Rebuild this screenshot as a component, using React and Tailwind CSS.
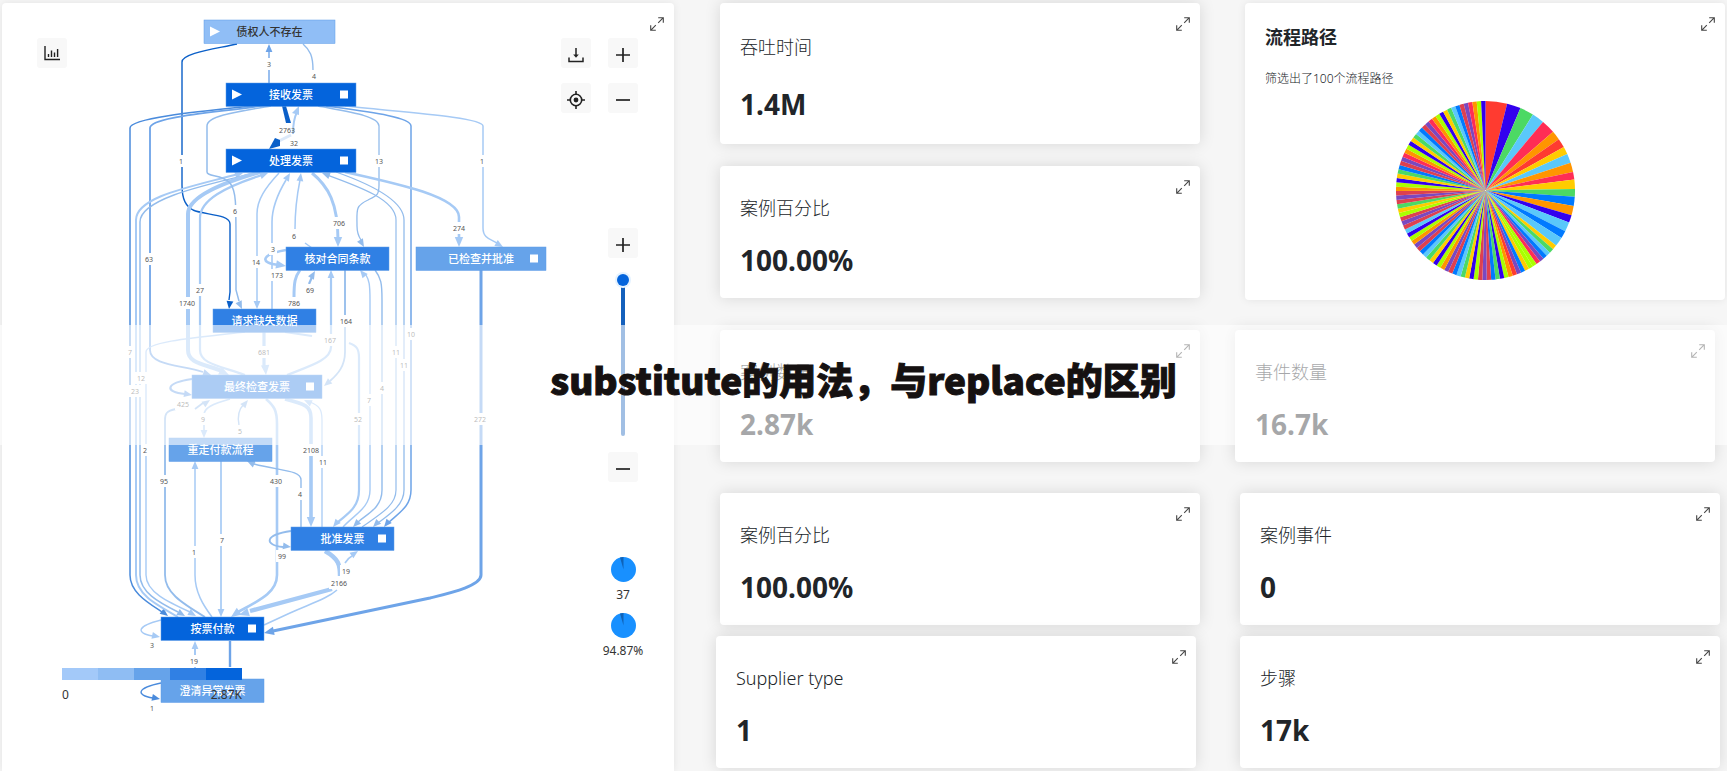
import React, { useState } from 'react';

const LIGHT = '#a6caf5';
const SOFT = '#93bcec';
const MID = '#6ea4e8';
const STRONG = '#4a8bdc';
const DARK = '#0a5fc8';

// d: path, w: line width, head: [x, y, angle in degrees] of the arrow tip
const edges = [
  { d: 'M237 44 C215 49 182 53 182 62 V185 C182 200 186 206 193 210 C204 215 230 214 230 224 V292 L229 300', c: DARK, w: 1.4, head: [229, 309, 97] },
  { d: 'M269 83 V50', c: MID, w: 1.4, head: [269, 44, -90] },
  { d: 'M303 44 C310 50 313 56 313 70', c: SOFT, w: 1.4 },
  { d: 'M262 105 C215 110 130 117 130 128 V575 C130 592 147 602 162 612', c: STRONG, w: 1.5, head: [168, 616, 38] },
  { d: 'M266 105 C225 112 150 116 150 128 V350 C150 365 180 365 203 372', c: MID, w: 1.8, head: [211, 375, 18] },
  { d: 'M238 174 C195 186 136 196 136 220 V575 C136 594 155 604 178 617', c: LIGHT, w: 2, head: [243, 173, -17] },
  { d: 'M255 173 C210 184 140 198 140 222 V575 C140 592 158 602 178 612', c: SOFT, w: 1.5, head: [185, 616, 30] },
  { d: 'M245 332 C190 338 146 342 146 352 V575 C146 592 168 602 190 612', c: LIGHT, w: 1.4, head: [196, 616, 30] },
  { d: 'M260 172 C225 182 188 196 188 214 V350 C188 364 205 364 222 371', c: LIGHT, w: 4, head: [229, 375, 25] },
  { d: 'M262 175 C225 187 200 200 200 218 V350 C200 364 220 366 245 375', c: LIGHT, w: 2.2, head: [268, 173, -20] },
  { d: 'M271 106 C235 112 207 116 207 126 V172 C207 177 222 174 230 183 C237 192 236 200 236 290 L239 301', c: SOFT, w: 1.5, head: [242, 309, 65] },
  { d: 'M279 173 C265 188 257 200 257 214 V301', c: LIGHT, w: 1.5, head: [257, 309, 90] },
  { d: 'M272 309 V222 C272 205 280 190 286 180', c: LIGHT, w: 1.6, head: [290, 173, -60] },
  { d: 'M312 248 L305 243 M295 229 C295 210 297 195 300 180', c: LIGHT, w: 1.5, head: [301, 173, -82] },
  { d: 'M312 173 C328 186 338 203 338 240', c: LIGHT, w: 3, head: [338, 247, 90] },
  { d: 'M318 106 C350 112 379 116 379 126 V185 C379 198 374 196 368 200 C355 206 357 210 357 226 C357 234 359 237 361 240', c: SOFT, w: 1.3, head: [364, 247, 60] },
  { d: 'M326 106 C370 112 411 117 411 126 V490 C411 506 400 512 388 523', c: MID, w: 1.5, head: [384, 527, 130] },
  { d: 'M345 106 C400 112 483 117 483 126 V228 C483 238 490 239 497 243', c: LIGHT, w: 1.5, head: [503, 247, 30] },
  { d: 'M345 172 C390 182 459 196 459 217 V240', c: LIGHT, w: 2.6, head: [459, 247, 90] },
  { d: 'M327 175 C360 187 396 200 396 220 V490 C396 505 382 513 362 527', c: SOFT, w: 1.2, head: [322, 173, -160] },
  { d: 'M336 172 C370 184 404 200 404 220 V490 C404 505 390 514 378 523', c: SOFT, w: 1.3, head: [373, 527, 135] },
  { d: 'M286 250 C262 254 258 263 279 265', c: LIGHT, w: 2.6, head: [286, 266, 10] },
  { d: 'M300 270 C295 277 294 282 294 297', c: LIGHT, w: 3 },
  { d: 'M309 284 L312 277', c: SOFT, w: 2.2, head: [315, 271, -60] },
  { d: 'M331 278 V347 C331 360 310 366 287 375', c: LIGHT, w: 2.2, head: [331, 270, -90] },
  { d: 'M345 270 V352 C345 366 338 374 330 381', c: SOFT, w: 1.8, head: [324, 386, 140] },
  { d: 'M264 332 V368', c: LIGHT, w: 3.2, head: [266, 375, 85] },
  { d: 'M285 332 L312 336 M349 343 C357 346 359 349 359 358 V490 C359 508 347 514 338 522', c: LIGHT, w: 2.2, head: [333, 527, 130] },
  { d: 'M366 275 C369 280 370 284 370 300 V490 C370 508 355 514 343 527', c: LIGHT, w: 1.4, head: [360, 270, -130] },
  { d: 'M375 270 C381 278 382 283 382 300 V490 C382 508 367 514 358 522', c: SOFT, w: 1.4, head: [353, 527, 135] },
  { d: 'M192 379 C165 383 164 392 185 394', c: MID, w: 2.2, head: [192, 395, 10] },
  { d: 'M203 403 L195 409 M176 409 C166 411 165 414 165 420 V575 C165 592 180 602 205 617', c: SOFT, w: 1.8, head: [210, 400, -35] },
  { d: 'M230 399 C212 404 204 408 204 415 V430', c: LIGHT, w: 1.7, head: [204, 438, 90] },
  { d: 'M239 425 C237 415 240 408 244 404', c: SOFT, w: 1.4, head: [248, 400, -50] },
  { d: 'M266 399 C274 406 277 410 277 424 V575 C277 593 258 601 238 612', c: LIGHT, w: 2.6, head: [231, 617, 145] },
  { d: 'M285 399 C305 404 311 406 311 418 V518', c: LIGHT, w: 3.6, head: [311, 527, 90] },
  { d: 'M310 402 C320 406 322 410 322 420 V527', c: LIGHT, w: 1.3, head: [304, 400, -155] },
  { d: 'M301 527 V480 C301 470 280 471 254 464', c: SOFT, w: 1.4, head: [247, 461, -155] },
  { d: 'M195 468 V575 C195 592 203 605 212 617', c: LIGHT, w: 1.5, head: [195, 461, -90] },
  { d: 'M221 461 V609', c: LIGHT, w: 1.7, head: [221, 617, 90] },
  { d: 'M291 531 C264 535 264 545 283 547', c: SOFT, w: 1.8, head: [291, 547, 8] },
  { d: 'M325 551 C339 559 340 565 340 576 M332 589 L250 611', c: LIGHT, w: 4.4, head: [239, 615, 163] },
  { d: 'M264 625 L290 613 C315 602 328 598 337 590 M345 563 Q348 558 352 556', c: LIGHT, w: 1.6, head: [358, 551, -35] },
  { d: 'M481 270 V575 C481 586 450 593 430 598 L273 631', c: MID, w: 3, head: [264, 633, 168] },
  { d: 'M161 620 C137 626 135 633 153 636', c: LIGHT, w: 1.3, head: [160, 637, 12] },
  { d: 'M195 648 V679', c: LIGHT, w: 2, head: [195, 641, -90] },
  { d: 'M230 641 V667', c: MID, w: 2.4 },
  { d: 'M161 683 C137 688 135 695 153 698', c: STRONG, w: 1.3, head: [160, 699, 12] },
];

const edgeLabels = [
  ['1', 181, 161], ['3', 269, 64], ['4', 314, 76], ['6', 235, 211], ['63', 149, 259],
  ['1740', 187, 303], ['27', 200, 290], ['14', 256, 262], ['3', 273, 249], ['173', 277, 275],
  ['6', 294, 236], ['706', 339, 223], ['13', 379, 161], ['1', 482, 161], ['274', 459, 228],
  ['786', 294, 303], ['69', 310, 290], ['164', 346, 321], ['167', 330, 340], ['681', 264, 352],
  ['10', 411, 334], ['11', 396, 352], ['11', 404, 365], ['7', 130, 352], ['12', 141, 378],
  ['23', 135, 391], ['4', 382, 388], ['7', 369, 400], ['425', 183, 404], ['272', 480, 419],
  ['9', 203, 419], ['5', 240, 431], ['52', 358, 419], ['2', 145, 450], ['2108', 311, 450],
  ['11', 323, 462], ['95', 164, 481], ['430', 276, 481], ['4', 300, 494], ['7', 222, 540],
  ['1', 194, 552], ['99', 282, 556], ['19', 346, 571], ['2166', 339, 583], ['3', 152, 645],
  ['19', 194, 661], ['1', 152, 708],
];

const nodes = [
  { name: '债权人不存在', x: 204, y: 20, w: 131, fill: '#90bef6', text: '#333333', start: true },
  { name: '接收发票', x: 226, y: 83, w: 130, fill: '#0464dc', start: true, end: true },
  { name: '处理发票', x: 226, y: 149, w: 130, fill: '#0464dc', start: true, end: true },
  { name: '核对合同条款', x: 286, y: 247, w: 103, fill: '#3080e4' },
  { name: '已检查并批准', x: 416, y: 247, w: 130, fill: '#66a3ea', end: true },
  { name: '请求缺失数据', x: 213, y: 309, w: 103, fill: '#3080e4' },
  { name: '最终检查发票', x: 192, y: 375, w: 130, fill: '#3080e4', end: true },
  { name: '重走付款流程', x: 169, y: 438, w: 103, fill: '#66a3ea' },
  { name: '批准发票', x: 291, y: 527, w: 103, fill: '#3080e4', end: true },
  { name: '按票付款', x: 161, y: 617, w: 103, fill: '#0464dc', end: true },
  { name: '澄清异常发票', x: 161, y: 679, w: 103, fill: '#66a3ea' },
];

const R = '#ff3b30';
const I = '#3300ee';
const G = '#4cd964';
const S = '#5ac8fa';
const K = '#ff2d55';
const O = '#ff9500';
const Y = '#ffcc00';
const B = '#007aff';
const P = '#7a48c0';
const L = '#aaff00';
const D = '#dd4050';

// [colour, end angle]
const bigSlices = [
  [R, 14], [I, 23], [G, 32], [S, 40], [K, 49], [O, 55], [R, 61], [Y, 66], [S, 72], [O, 78],
  [K, 83], [Y, 89], [G, 94], [B, 100], [O, 106], [I, 111], [S, 117], [B, 122], [S, 128],
  [Y, 131], [G, 134],
];
const smallSlices = [
  S, B, P, K, L, L, Y, B, P, R, O, L, I, G, B, D, P,
  D, L, I, Y, G, S, B, D, P, O, L, I, Y, G, S, B, D, P, O, L, I, S, D, P, D, L, Y, G, D, P, D, O,
  L, I, Y, G, B, D, P, K, O, L, I, Y, G, S, B, D, P, K, O, L, I, Y, G, S, B, D, P, K, O, L, I,
];
const slices = [
  ...bigSlices,
  ...smallSlices.map((color, i) => [color, 134 + ((i + 1) * 226) / smallSlices.length]),
];

const point = (deg, r) => {
  const a = ((deg - 90) * Math.PI) / 180;
  return `${(r + r * Math.cos(a)).toFixed(2)} ${(r + r * Math.sin(a)).toFixed(2)}`;
};

const ExpandButton = () => (
  <button type="button" aria-label="展开" className="absolute right-[10px] top-[14px] text-[#444444]">
    <svg width="14" height="14" viewBox="0 0 14 14" fill="none" stroke="currentColor" strokeWidth="1.1" className="block">
      <path d="M8.2 0.7H13.3V5.8M13.3 0.7L8.2 5.8M5.8 13.3H0.7V8.2M0.7 13.3L5.8 8.2" />
    </svg>
  </button>
);

const ToolButton = ({ label, className = 'pt-1', children }) => (
  <button
    type="button"
    aria-label={label}
    className={`flex size-[30px] shrink-0 items-center justify-center rounded-[3px] bg-[#f8f8f8] text-[#222222] ${className}`}
  >
    {children}
  </button>
);

const PlusIcon = () => (
  <svg width="14" height="14" viewBox="0 0 14 14" stroke="currentColor" strokeWidth="1.7">
    <path d="M0 7H14M7 0V14" />
  </svg>
);

const MinusIcon = () => (
  <svg width="14" height="14" viewBox="0 0 14 14" stroke="currentColor" strokeWidth="1.7">
    <path d="M0 7H14" />
  </svg>
);

const DownloadIcon = () => (
  <svg width="16" height="16" viewBox="0 0 16 16" fill="none" stroke="currentColor" strokeWidth="1.5">
    <path d="M8 1V9" />
    <path d="M5.2 7.5H10.8L8 10.8Z" fill="currentColor" stroke="none" />
    <path d="M1 10.5V14.6H15V10.5" />
  </svg>
);

const TargetIcon = () => (
  <svg width="18" height="18" viewBox="0 0 18 18" fill="none" stroke="currentColor" strokeWidth="1.6">
    <circle cx="9" cy="9" r="5.7" />
    <circle cx="9" cy="9" r="2.4" fill="currentColor" stroke="none" />
    <path d="M9 0V3.3M9 14.7V18M0 9H3.3M14.7 9H18" />
  </svg>
);

const ChartIcon = () => (
  <svg width="16" height="16" viewBox="0 0 16 16" fill="none" stroke="currentColor" strokeWidth="1.4">
    <path d="M1 1V14.5H16M4.5 12V9M7.5 12V5.5M10.5 12V7.5M13.6 12V4" />
  </svg>
);

const ProcessGraph = () => (
  <svg
    width="560"
    height="720"
    viewBox="2 3 560 720"
    className="absolute left-0 top-0"
    role="img"
    aria-label="流程图"
  >
    {edges.map(({ d, c, w, head }, i) => (
      <g key={i}>
        <path d={d} fill="none" stroke={c} strokeWidth={w} />
        {head && (
          <path
            d={w > 2.5 ? 'M0 0L-10 -4.2V4.2Z' : 'M0 0L-8 -3.4V3.4Z'}
            fill={c}
            transform={`translate(${head[0]} ${head[1]}) rotate(${head[2]})`}
          />
        )}
      </g>
    ))}
    {/* main flow between the first two steps */}
    <path d="M293 134C293 124 295 116 297 112" fill="none" stroke={LIGHT} strokeWidth="2" />
    <path d="M299 106L292 113L299 115Z" fill={LIGHT} />
    <path d="M291 135L279 141" stroke="#dbe8f8" strokeWidth="3" />
    <path d="M282 106H286L291 123H286Z" fill={DARK} />
    <path d="M269 149L275 138L280 140V146Z" fill={DARK} />
    {[...edgeLabels, ['2763', 287, 130], ['32', 294, 143]].map(([text, x, y], i) => (
      <g key={i}>
        {i < edgeLabels.length && (
          <rect x={x - text.length * 2 - 2} y={y - 6} width={text.length * 4 + 4} height="12" fill="#ffffff" />
        )}
        <text x={x} y={y + 3} textAnchor="middle" fill="#555555" className="text-[7px]">
          {text}
        </text>
      </g>
    ))}
    {nodes.map(({ name, x, y, w, fill, text, start, end }) => (
      <g key={name}>
        <rect x={x} y={y} width={w} height="23.5" fill={fill} stroke="#5e9ce8" strokeWidth="0.5" />
        {start && <path d={`M${x + 6} ${y + 6.5}L${x + 16} ${y + 11.5}L${x + 6} ${y + 16.5}Z`} fill="#ffffff" />}
        {end && <rect x={x + w - 16} y={y + 7.5} width="8" height="8" fill="#ffffff" />}
        <text x={x + w / 2} y={y + 16} textAnchor="middle" fill={text || '#ffffff'} className="text-[11px] font-medium">
          {name}
        </text>
      </g>
    ))}
  </svg>
);

const legendColors = ['bg-[#a3c9f9]', 'bg-[#8fbdf3]', 'bg-[#66a3ea]', 'bg-[#3080e4]', 'bg-[#0464dc]'];

const Legend = () => (
  <div className="absolute left-[60px] top-[665px] w-[180px] text-xs text-[#333333]">
    <div className="flex h-3">
      {legendColors.map((color) => (
        <div key={color} className={`flex-1 ${color}`} />
      ))}
    </div>
    <div className="mt-[6px] flex justify-between leading-[18px]">
      <span>0</span>
      <span>2.87K</span>
    </div>
  </div>
);

const SmallPie = ({ value }) => (
  <div className="flex flex-col items-center">
    <svg width="25" height="25" viewBox="0 0 25 25" className="block">
      <circle cx="12.5" cy="12.5" r="12.5" fill="#1890ff" />
      <path d="M12.5 12.5L9 0.6A12.4 12.4 0 0 1 12.5 0.1Z" fill="#0f62b8" />
    </svg>
    <span className="mt-[3px] text-xs leading-5 text-[#333333]">{value}</span>
  </div>
);

const GraphPanel = () => {
  const [level, setLevel] = useState(100);

  return (
    <section className="relative min-w-0 flex-[672] rounded-t bg-white shadow-[0_0_8px_rgba(0,0,0,0.08)]">
      <ProcessGraph />
      <Legend />
      <ExpandButton />
      <div className="relative flex items-start gap-[17px] p-[35px] pr-9">
        <ToolButton label="统计" className="pt-0">
          <ChartIcon />
        </ToolButton>
        <div className="ml-auto flex flex-col gap-[15px]">
          <ToolButton label="下载">
            <DownloadIcon />
          </ToolButton>
          <ToolButton label="定位">
            <TargetIcon />
          </ToolButton>
        </div>
        <div className="flex w-[30px] flex-col items-center">
          <div className="flex flex-col gap-[15px]">
            <ToolButton label="放大">
              <PlusIcon />
            </ToolButton>
            <ToolButton label="缩小">
              <MinusIcon />
            </ToolButton>
          </div>
          <div className="mt-[115px] flex flex-col items-center gap-4">
            <ToolButton label="增加">
              <PlusIcon />
            </ToolButton>
            <input
              type="range"
              aria-label="显示层级"
              min="0"
              max="100"
              value={level}
              onChange={(e) => setLevel(Number(e.target.value))}
              className="h-[162px] w-3 appearance-none bg-transparent [direction:rtl] [writing-mode:vertical-lr] [&::-webkit-slider-runnable-track]:w-1 [&::-webkit-slider-runnable-track]:rounded-full [&::-webkit-slider-runnable-track]:bg-[#1460bc] [&::-webkit-slider-thumb]:-ml-1 [&::-webkit-slider-thumb]:size-3 [&::-webkit-slider-thumb]:appearance-none [&::-webkit-slider-thumb]:rounded-full [&::-webkit-slider-thumb]:bg-[#0464dc] [&::-webkit-slider-thumb]:shadow-[0_0_0_2px_#e4f2ff]"
            />
            <ToolButton label="减少">
              <MinusIcon />
            </ToolButton>
          </div>
          <div className="mt-[75px] flex flex-col gap-2">
            <SmallPie value="37" />
            <SmallPie value="94.87%" />
          </div>
        </div>
      </div>
    </section>
  );
};

const StatCard = ({ title, value, className = '', spacing = 'gap-[18px] pt-7 pb-[18px]' }) => (
  <article className={`relative flex flex-col rounded bg-white px-5 shadow-[0_0_16px_rgba(0,0,0,0.13)] ${spacing} ${className}`}>
    <ExpandButton />
    <h2 className="text-lg leading-7 font-light text-[#212529]">{title}</h2>
    <p className="text-[28px] leading-10 font-bold text-[#212529]">{value}</p>
  </article>
);

const PathCard = () => (
  <article className="relative ml-[10px] rounded bg-white px-5 pt-5 pb-5 shadow-[0_0_8px_rgba(0,0,0,0.08)]">
    <ExpandButton />
    <h2 className="text-lg leading-7 font-bold text-[#212529]">流程路径</h2>
    <p className="mt-[18px] text-xs leading-5 font-light text-[#212529]">筛选出了100个流程路径</p>
    <svg width="179" height="179" viewBox="0 0 178 178" className="mx-auto mt-3 block">
      {slices.map(([color, end], i) => {
        const start = i ? slices[i - 1][1] : 0;
        return <path key={i} d={`M89 89L${point(start, 89)}A89 89 0 0 1 ${point(end, 89)}Z`} fill={color} />;
      })}
    </svg>
  </article>
);

const App = () => (
  <div className="relative flex min-h-screen bg-[#f6f6f6] px-[2px] pt-[3px] font-['Noto_Sans','Noto_Sans_CJK_SC',sans-serif]">
    <GraphPanel />
    <div className="ml-[42px] min-w-0 flex-[484] pb-[3px]">
      <StatCard title="吞吐时间" value="1.4M" spacing="gap-[23px] pt-[30px] pb-5" className="ml-1" />
      <StatCard title="案例百分比" value="100.00%" className="mt-[22px] ml-1" />
      <StatCard title="案例数量" value="2.87k" className="mt-8 ml-1" />
      <StatCard title="案例百分比" value="100.00%" className="mt-[31px] ml-1" />
      <StatCard title="Supplier type" value="1" className="mt-[11px] mr-1" />
    </div>
    <div className="ml-[35px] min-w-0 flex-[490] pb-[3px]">
      <PathCard />
      <StatCard title="事件数量" value="16.7k" className="mt-[30px] mr-[10px]" />
      <StatCard title="案例事件" value="0" className="mx-[5px] mt-[31px]" />
      <StatCard title="步骤" value="17k" className="mx-[5px] mt-[11px]" />
    </div>
    <div className="absolute inset-x-0 top-[325px] flex h-[120px] items-center justify-center bg-white/60 pb-[10px]">
      <h1 className="font-['Noto_Sans_CJK_SC',sans-serif] text-[37px] font-black whitespace-nowrap text-[#151111] [-webkit-text-stroke:1px_#151111]">
        substitute的用法，与replace的区别
      </h1>
    </div>
  </div>
);

export default App;
